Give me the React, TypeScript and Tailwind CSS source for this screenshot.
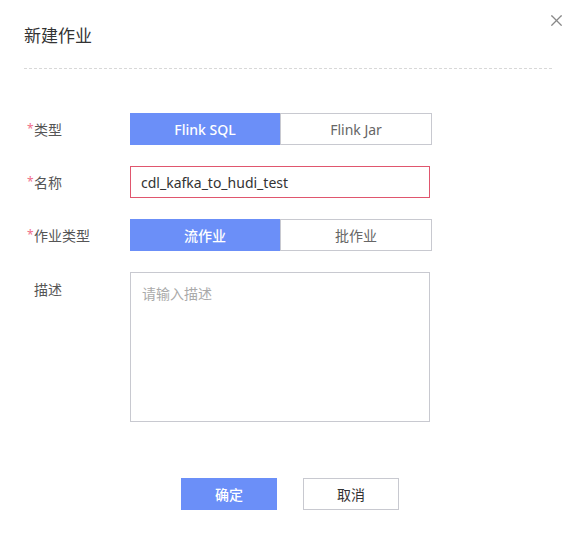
import { X } from "lucide-react";

const font = {
  fontFamily: '"Noto Sans", "Noto Sans CJK SC", sans-serif',
};

function Label({ text, required }: { text: string; required?: boolean }) {
  return (
    <div className="w-[103px] shrink-0 h-8 flex items-center text-[14px] text-[#555]">
      <span className="w-[7px] text-[#f0708a] text-[12px]">{required ? "*" : ""}</span>
      <span>{text}</span>
    </div>
  );
}

function Segmented({ options }: { options: string[] }) {
  return (
    <div className="flex w-[302px] h-8">
      {options.map((o, i) => (
        <div
          key={o}
          className={
            i === 0
              ? "flex-1 flex items-center justify-center bg-[#6b8ff8] text-white text-[14px] font-medium"
              : "flex-1 flex items-center justify-center border border-[#c8c9d0] text-[#666] text-[14px]"
          }
        >
          {o}
        </div>
      ))}
    </div>
  );
}

export default function App() {
  return (
    <div className="relative w-[580px] h-[537px] bg-white" style={font}>
      <button className="absolute right-[14px] top-[11px] text-[#888]">
        <X size={19} strokeWidth={1.5} />
      </button>

      <div className="px-6 pt-[23px]">
        <h2 className="text-[17px] leading-[26px] text-[#333]">新建作业</h2>
        <div className="mt-[19px] mr-[4px] border-b border-dashed border-[#d8d8d8]" />
      </div>

      <div className="pl-[27px] pt-[44px] flex flex-col gap-[21px]">
        <div className="flex items-center">
          <Label text="类型" required />
          <Segmented options={["Flink SQL", "Flink Jar"]} />
        </div>
        <div className="flex items-center">
          <Label text="名称" required />
          <div className="w-[300px] h-8 border border-[#e0566e] flex items-center px-[10px] text-[14px] text-[#333]">
            cdl_kafka_to_hudi_test
          </div>
        </div>
        <div className="flex items-center">
          <Label text="作业类型" required />
          <Segmented options={["流作业", "批作业"]} />
        </div>
        <div className="flex items-start">
          <div className="pt-[1px]">
            <Label text="描述" />
          </div>
          <div className="w-[300px] h-[150px] border border-[#c8c9d0] px-[11px] pt-[10px] text-[14px] text-[#aaa]">
            请输入描述
          </div>
        </div>
      </div>

      <div className="flex justify-center gap-[26px] mt-[56px]">
        <button className="w-[96px] h-8 bg-[#6b8ff8] text-white text-[14px] font-medium">确定</button>
        <button className="w-[96px] h-8 border border-[#c8c9d0] text-[#333] text-[14px]">取消</button>
      </div>
    </div>
  );
}
